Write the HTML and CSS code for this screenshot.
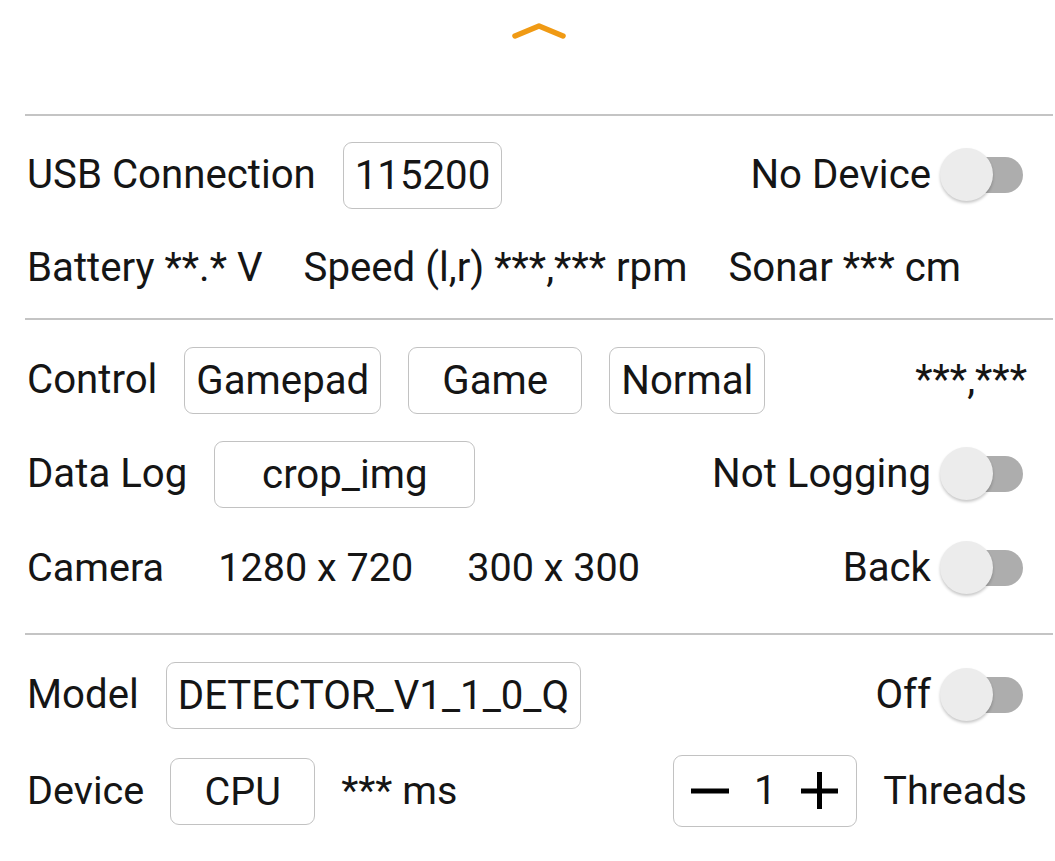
FILE: index.html
```html
<!DOCTYPE html>
<html>
<head>
<meta charset="utf-8">
<link rel="stylesheet" href="styles.css">
</head>
<body>
<div class="page">
  <div class="top">
    <svg class="chevron" width="60" height="22" viewBox="0 0 60 22"><path d="M5 15 L29 5 L53 15" fill="none" stroke="#f09a14" stroke-width="5.5" stroke-linecap="round" stroke-linejoin="round"/></svg>
  </div>
  <div class="sep"></div>
  <section class="sec sec1">
    <div class="row r-usb">
      <span class="txt">USB Connection</span>
      <span class="box">115200</span>
      <span class="fill"></span>
      <span class="sw"><span class="txt">No Device</span><span class="toggle"><span class="track"></span><span class="thumb"></span></span></span>
    </div>
    <div class="row r-stat">
      <span class="txt">Battery **.* V</span>
      <span class="txt">Speed (l,r) ***,*** rpm</span>
      <span class="txt">Sonar *** cm</span>
    </div>
  </section>
  <div class="sep"></div>
  <section class="sec sec2">
    <div class="row">
      <span class="txt">Control</span>
      <span class="box">Gamepad</span>
      <span class="box w-game">Game</span>
      <span class="box">Normal</span>
      <span class="fill"></span>
      <span class="txt">***,***</span>
    </div>
    <div class="row">
      <span class="txt">Data Log</span>
      <span class="box w-crop">crop_img</span>
      <span class="fill"></span>
      <span class="sw"><span class="txt">Not Logging</span><span class="toggle"><span class="track"></span><span class="thumb"></span></span></span>
    </div>
    <div class="row r-cam">
      <span class="txt">Camera</span>
      <span class="txt">1280 x 720</span>
      <span class="txt">300 x 300</span>
      <span class="fill"></span>
      <span class="sw"><span class="txt">Back</span><span class="toggle"><span class="track"></span><span class="thumb"></span></span></span>
    </div>
  </section>
  <div class="sep"></div>
  <section class="sec sec3">
    <div class="row">
      <span class="txt">Model</span>
      <span class="box">DETECTOR_V1_1_0_Q</span>
      <span class="fill"></span>
      <span class="sw"><span class="txt">Off</span><span class="toggle"><span class="track"></span><span class="thumb"></span></span></span>
    </div>
    <div class="row r-dev">
      <span class="txt">Device</span>
      <span class="box w-cpu">CPU</span>
      <span class="txt">*** ms</span>
      <span class="fill"></span>
      <span class="stepper">
        <svg width="40" height="40" viewBox="0 0 40 40"><path d="M1 20 H39" stroke="#000" stroke-width="5"/></svg>
        <span class="num">1</span>
        <svg width="40" height="40" viewBox="0 0 40 40"><path d="M1 20 H38 M19.5 1 V38" stroke="#000" stroke-width="5"/></svg>
      </span>
      <span class="txt">Threads</span>
    </div>
  </section>
</div>
</body>
</html>
```
FILE: styles.css
```css
html, body {
  margin: 0;
  padding: 0;
  background: #fff;
}
body {
  font-family: Roboto, "Noto Sans", sans-serif;
  color: #151515;
  font-size: 40.2px;
}
.page {
  width: 1055px;
  height: 861px;
  overflow: hidden;
}
.top {
  height: 114px;
  display: flex;
  justify-content: center;
}
.chevron {
  margin-top: 21px;
  margin-left: 24px;
}
.sep {
  height: 2px;
  background: #c4c4c4;
  margin: 0 2px 0 25px;
}
.sec {
  padding: 0 28px 0 27px;
}
.sec1 { padding-top: 9px; padding-bottom: 6px; height: 187px; }
.sec2 { padding-top: 13px; padding-bottom: 18px; height: 282px; }
.sec3 { padding-top: 13px; }
.row {
  display: flex;
  align-items: center;
  gap: 27px;
  height: 94px;
}
.r-usb { height: 100px; }
.r-stat { height: 87px; gap: 41px; }
.r-cam { gap: 54px; }
.r-cam > .txt { font-size: 39.6px; }
.r-dev { height: 98px; gap: 26px; }
.r-dev > .txt, .r-dev .box { font-size: 39.6px; }
.r-cam .fill { margin-left: -54px; }
.r-dev .fill { margin-left: -26px; }
.fill { flex: 1; margin-left: -27px; }
.txt {
  white-space: nowrap;
  line-height: 1;
}
.sw {
  display: flex;
  align-items: center;
  gap: 9px;
  margin-right: 4px;
}
.sw .txt { font-size: 40.2px; }
.box {
  box-sizing: border-box;
  height: 67px;
  border: 1.5px solid #c2c2c2;
  border-radius: 9px;
  padding: 0 11px;
  display: flex;
  align-items: center;
  justify-content: center;
  white-space: nowrap;
}
.w-game { width: 174px; }
.w-crop { width: 261px; }
.w-cpu { width: 145px; }
.toggle {
  position: relative;
  width: 83px;
  height: 54px;
  flex: none;
}
.track {
  position: absolute;
  left: 20px;
  top: 9px;
  width: 63px;
  height: 36px;
  border-radius: 18px;
  background: #adadad;
}
.thumb {
  position: absolute;
  left: 0;
  top: 0;
  width: 53px;
  height: 53px;
  border-radius: 50%;
  background: #ececec;
  box-shadow: 0 2px 3px rgba(0,0,0,0.22);
}
.stepper {
  box-sizing: border-box;
  width: 184px;
  height: 72px;
  border: 1.5px solid #c2c2c2;
  border-radius: 9px;
  display: flex;
  align-items: center;
  justify-content: space-between;
  padding: 0 16px;
}
.num { line-height: 1; }
```
